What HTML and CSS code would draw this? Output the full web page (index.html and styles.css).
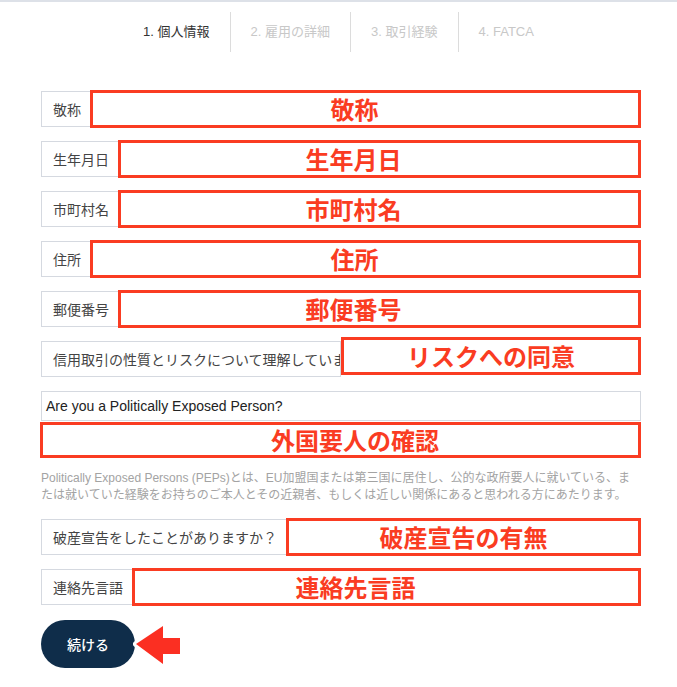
FILE: index.html
```html
<!DOCTYPE html>
<html lang="ja">
<head>
  <meta charset="UTF-8" />
  <meta name="viewport" content="width=device-width, initial-scale=1.0" />
  <title>個人情報</title>
  <link rel="stylesheet" href="styles.css">
</head>
<body>
  <ul class="steps">
    <li class="step active">1. 個人情報</li>
    <li class="step">2. 雇用の詳細</li>
    <li class="step">3. 取引経験</li>
    <li class="step">4. FATCA</li>
  </ul>

  <form class="form">
    <div class="row">
      <span class="label">敬称</span>
      <span class="mark">敬称</span>
    </div>
    <div class="row">
      <span class="label">生年月日</span>
      <span class="mark mark-wide">生年月日</span>
    </div>
    <div class="row">
      <span class="label">市町村名</span>
      <span class="mark mark-wide">市町村名</span>
    </div>
    <div class="row">
      <span class="label">住所</span>
      <span class="mark">住所</span>
    </div>
    <div class="row">
      <span class="label">郵便番号</span>
      <span class="mark mark-wide">郵便番号</span>
    </div>
    <div class="row">
      <span class="label label-long">信用取引の性質とリスクについて理解しています</span>
      <span class="mark mark-fixed mark-up">リスクへの同意</span>
    </div>

    <div class="question">Are you a Politically Exposed Person?</div>
    <div class="mark mark-full">外国要人の確認</div>
    <p class="help">Politically Exposed Persons (PEPs)とは、EU加盟国または第三国に居住し、公的な政府要人に就いている、または就いていた経験をお持ちのご本人とその近親者、もしくは近しい関係にあると思われる方にあたります。</p>

    <div class="row">
      <span class="label">破産宣告をしたことがありますか？</span>
      <span class="mark mark-center">破産宣告の有無</span>
    </div>
    <div class="row">
      <span class="label">連絡先言語</span>
      <span class="mark mark-lang">連絡先言語</span>
    </div>

    <div class="submit">
      <button type="button" class="next-btn">続ける</button>
      <svg class="arrow" width="52" height="46" viewBox="0 0 52 46">
        <polygon points="3,22 30,4 30,16 47,16 47,32 30,32 30,42" fill="#fb2f22" stroke="#fff" stroke-width="6" stroke-linejoin="round" paint-order="stroke" />
      </svg>
    </div>
  </form>
</body>
</html>
```

FILE: styles.css
```css
body {
  margin: 0;
  border-top: 2px solid #dde1e8;
  font-family: "Liberation Sans", "Noto Sans CJK JP", sans-serif;
  color: #333;
  background: #fff;
}
.steps {
  display: flex;
  justify-content: center;
  list-style: none;
  margin: 0;
  padding: 10px 0 0 0;
}
.step {
  height: 40px;
  line-height: 40px;
  padding: 0 20px;
  font-size: 13px;
  color: #c8c8c8;
  border-left: 1px solid #dcdcdc;
}
.step:first-child {
  border-left: none;
}
.step.active {
  color: #333;
}
.form {
  width: 600px;
  margin: 39px 0 0 41px;
}
.row {
  display: flex;
  align-items: center;
  height: 36px;
  margin-bottom: 14px;
}
.label {
  box-sizing: border-box;
  flex: none;
  height: 36px;
  line-height: 34px;
  padding: 0 11px;
  border: 1px solid #d5d9e0;
  font-family: "Noto Sans CJK JP", sans-serif;
  font-size: 14px;
  color: #444;
  white-space: nowrap;
}
.label-long {
  flex: 1;
  overflow: hidden;
}
.mark {
  box-sizing: border-box;
  flex: 1;
  height: 38px;
  margin: -1px 0 -1px -3px;
  padding-right: 22px;
  border: 3px solid #fa3c22;
  background: #fff;
  color: #fa3c22;
  font-family: "Noto Sans CJK JP", sans-serif;
  font-size: 24px;
  font-weight: bold;
  line-height: 31px;
  text-align: center;
  white-space: nowrap;
}
.mark-wide {
  padding-right: 52px;
}
.mark-lang {
  padding-right: 62px;
}
.mark-center {
  padding-right: 0;
}
.mark-fixed {
  flex: none;
  width: 300px;
  padding-right: 0;
  margin-left: 0;
}
.mark-up {
  margin: -4px 0 2px 0;
}
.mark-full {
  height: 36px;
  margin: 1px 0 0 -1px;
  width: 601px;
  padding: 0 0 0 29px;
  line-height: 29px;
}
.question {
  box-sizing: border-box;
  height: 30px;
  margin-top: 1px;
  padding: 0 4px;
  border: 1px solid #d5d9e0;
  line-height: 28px;
  font-size: 14px;
  color: #222;
}
.help {
  margin: 12px 0 15px;
  font-size: 12px;
  line-height: 17px;
  color: #a3a3a3;
}
.submit {
  position: relative;
  margin-top: 15px;
  height: 48px;
}
.next-btn {
  width: 94px;
  height: 48px;
  border: none;
  border-radius: 24px;
  background: #0f2d4a;
  color: #fff;
  font-family: "Noto Sans CJK JP", sans-serif;
  font-size: 14px;
  font-weight: 500;
  cursor: pointer;
}
.arrow {
  position: absolute;
  left: 92px;
  top: 2px;
}
```
